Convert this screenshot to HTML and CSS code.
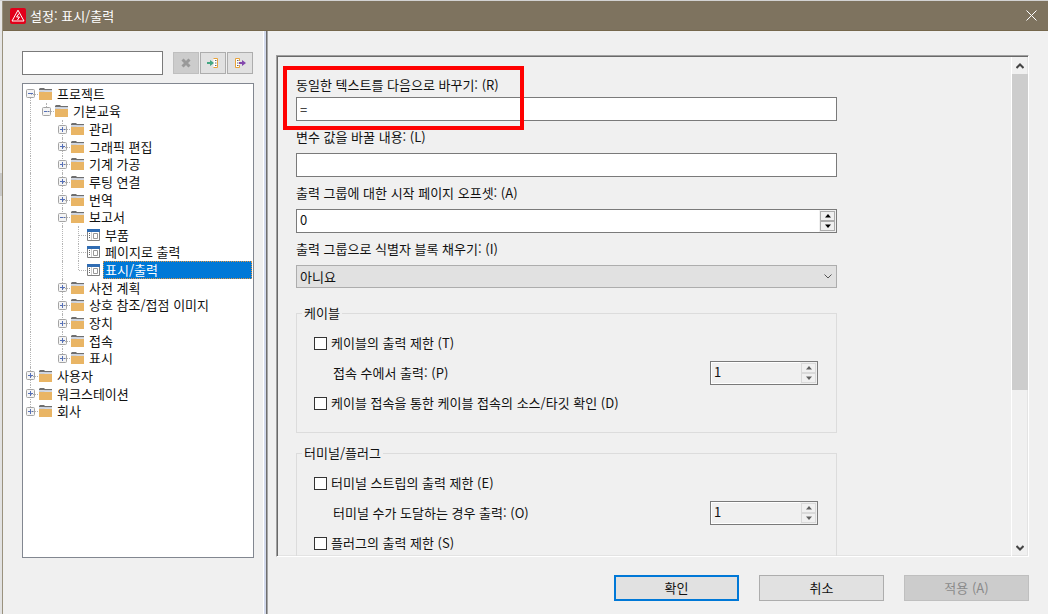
FILE: index.html
```html
<!DOCTYPE html>
<html lang="ko">
<head>
<meta charset="utf-8">
<title>설정: 표시/출력</title>
<link rel="stylesheet" href="styles.css">
</head>
<body>
<svg class="symbols" aria-hidden="true">
  <symbol id="folder" viewBox="0 0 13 12"><path d="M5 1h8v3H0V2h5z" fill="#d5dae3"/><path d="M1 0h4l1 1h7v1H0V1z" fill="#6f6f6f"/><path d="M0 3h5l1-1h7v1H6L5 4H0z" fill="#c9ced8"/><path d="M0 4h13v8H0z" fill="#e9b565"/></symbol>
  <symbol id="page" viewBox="0 0 13 12"><path d="M.5 1.500h12v10H.5z" fill="#fff" stroke="#808080"/><path d="M0 0h13v3H0z" fill="#2f6cb3"/><path d="M2 4h1v1H2zM2 6h1v1H2zM2 8h1v1H2z" fill="#666"/><path d="M4.500 3v8" stroke="#ccc"/><path d="M6.500 4.500h4v5h-4z" fill="#fff" stroke="#999"/></symbol>
  <symbol id="plus" viewBox="0 0 9 9"><rect x=".5" y=".5" width="8" height="8" rx="1" fill="#f4f4f4" stroke="#a4a4a4"/><path d="M2 4.500h5M4.500 2v5" stroke="#5570b8"/></symbol>
  <symbol id="minus" viewBox="0 0 9 9"><rect x=".5" y=".5" width="8" height="8" rx="1" fill="#f4f4f4" stroke="#a4a4a4"/><path d="M2 4.500h5" stroke="#5570b8"/></symbol>
  <symbol id="up" viewBox="0 0 6 4"><path d="M3 0l3 3.500H0z"/></symbol>
  <symbol id="down" viewBox="0 0 6 4"><path d="M3 4L0 .5h6z"/></symbol>
</svg>
<div class="desktop">
<main class="dialog">
  <header class="titlebar">
    <svg class="logo" viewBox="0 0 16 16" aria-hidden="true"><rect width="16" height="16" rx="2" fill="#e2001a"/><path d="M8 2.200L14 13H2z" fill="none" stroke="#fff"/><path d="M9 5.500L6.500 9h3L7.500 12" fill="none" stroke="#fff"/></svg>
    <h1>설정: 표시/출력</h1>
    <button class="close" aria-label="닫기"><svg width="11" height="11" viewBox="0 0 11 11"><path d="M.5.5l10 10M10.500.5l-10 10" stroke="#fff" fill="none"/></svg></button>
  </header>
  <div class="body">
    <aside class="nav">
      <div class="toolbar">
        <input class="search" type="text" aria-label="검색">
        <button class="tool off" disabled aria-label="지우기"><svg width="10" height="10" viewBox="0 0 10 10"><path d="M1.500 1.500l7 7M8.500 1.500l-7 7" stroke="#999" stroke-width="3"/></svg></button>
        <button class="tool" aria-label="가져오기"><svg width="12" height="10" viewBox="0 0 12 10"><path d="M6.500.5h4v9h-4" fill="#fff" stroke="#e8a33a"/><path d="M8 2.500h1.500M8 5h1.500M8 7.500h1.500" stroke="#666"/><path d="M0 4h3V2l4 3-4 3V6H0z" fill="#43a783"/></svg></button>
        <button class="tool" aria-label="내보내기"><svg width="12" height="10" viewBox="0 0 12 10"><path d="M5.500 3V.5h-4v9h4V7" fill="#fff" stroke="#e8a33a"/><path d="M3 2.500h1.500M3 5h1.500M3 7.500h1.500" stroke="#666"/><path d="M5 4h3V2l4 3-4 3V6H5z" fill="#8247ad"/></svg></button>
      </div>
      <div class="tree-box">
      <ul class="tree" role="tree">
        <li role="treeitem"><i class="first"><svg><use href="#minus"/></svg></i><svg class="ico"><use href="#folder"/></svg><span>프로젝트</span></li>
        <li role="treeitem"><i class="line"></i><i class="end"><svg><use href="#minus"/></svg></i><svg class="ico"><use href="#folder"/></svg><span>기본교육</span></li>
        <li role="treeitem"><i class="line"></i><i></i><i class="tee"><svg><use href="#plus"/></svg></i><svg class="ico"><use href="#folder"/></svg><span>관리</span></li>
        <li role="treeitem"><i class="line"></i><i></i><i class="tee"><svg><use href="#plus"/></svg></i><svg class="ico"><use href="#folder"/></svg><span>그래픽 편집</span></li>
        <li role="treeitem"><i class="line"></i><i></i><i class="tee"><svg><use href="#plus"/></svg></i><svg class="ico"><use href="#folder"/></svg><span>기계 가공</span></li>
        <li role="treeitem"><i class="line"></i><i></i><i class="tee"><svg><use href="#plus"/></svg></i><svg class="ico"><use href="#folder"/></svg><span>루팅 연결</span></li>
        <li role="treeitem"><i class="line"></i><i></i><i class="tee"><svg><use href="#plus"/></svg></i><svg class="ico"><use href="#folder"/></svg><span>번역</span></li>
        <li role="treeitem"><i class="line"></i><i></i><i class="tee"><svg><use href="#minus"/></svg></i><svg class="ico"><use href="#folder"/></svg><span>보고서</span></li>
        <li role="treeitem"><i class="line"></i><i></i><i class="line"></i><i class="tee"></i><svg class="ico"><use href="#page"/></svg><span>부품</span></li>
        <li role="treeitem"><i class="line"></i><i></i><i class="line"></i><i class="tee"></i><svg class="ico"><use href="#page"/></svg><span>페이지로 출력</span></li>
        <li role="treeitem" aria-selected="true"><i class="line"></i><i></i><i class="line"></i><i class="end"></i><svg class="ico"><use href="#page"/></svg><span class="selected">표시/출력</span></li>
        <li role="treeitem"><i class="line"></i><i></i><i class="tee"><svg><use href="#plus"/></svg></i><svg class="ico"><use href="#folder"/></svg><span>사전 계획</span></li>
        <li role="treeitem"><i class="line"></i><i></i><i class="tee"><svg><use href="#plus"/></svg></i><svg class="ico"><use href="#folder"/></svg><span>상호 참조/접점 이미지</span></li>
        <li role="treeitem"><i class="line"></i><i></i><i class="tee"><svg><use href="#plus"/></svg></i><svg class="ico"><use href="#folder"/></svg><span>장치</span></li>
        <li role="treeitem"><i class="line"></i><i></i><i class="tee"><svg><use href="#plus"/></svg></i><svg class="ico"><use href="#folder"/></svg><span>접속</span></li>
        <li role="treeitem"><i class="line"></i><i></i><i class="end"><svg><use href="#plus"/></svg></i><svg class="ico"><use href="#folder"/></svg><span>표시</span></li>
        <li role="treeitem"><i class="tee"><svg><use href="#plus"/></svg></i><svg class="ico"><use href="#folder"/></svg><span>사용자</span></li>
        <li role="treeitem"><i class="tee"><svg><use href="#plus"/></svg></i><svg class="ico"><use href="#folder"/></svg><span>워크스테이션</span></li>
        <li role="treeitem"><i class="end"><svg><use href="#plus"/></svg></i><svg class="ico"><use href="#folder"/></svg><span>회사</span></li>
      </ul>
      </div>
    </aside>
    <div class="splitter"></div>
    <section class="content">
      <div class="viewport">
        <form class="form" id="settings">
          <div class="field tight"><label for="same">동일한 텍스트를 다음으로 바꾸기: (R)</label><input id="same" type="text" value="="></div>
          <div class="field"><label for="vars">변수 값을 바꿀 내용: (L)</label><input id="vars" type="text"></div>
          <div class="field"><label for="offset">출력 그룹에 대한 시작 페이지 오프셋: (A)</label>
            <div class="spin"><input id="offset" type="number" value="0"><div class="steps"><button type="button" aria-label="증가"><svg><use href="#up"/></svg></button><button type="button" aria-label="감소"><svg><use href="#down"/></svg></button></div></div>
          </div>
          <div class="field"><label for="fill">출력 그룹으로 식별자 블록 채우기: (I)</label>
            <div class="combo"><select id="fill"><option>아니요</option></select><svg class="chevron" viewBox="0 0 8 5"><path d="M.5.5L4 4 7.500.5" fill="none" stroke="#555"/></svg></div>
          </div>
          <fieldset>
            <legend>케이블</legend>
            <div class="row"><input type="checkbox" id="c1"><label for="c1">케이블의 출력 제한 (T)</label></div>
            <div class="row sub"><label for="n1">접속 수에서 출력: (P)</label>
              <div class="spin small"><input id="n1" type="number" value="1" disabled><div class="steps"><button type="button" disabled aria-label="증가"><svg><use href="#up"/></svg></button><button type="button" disabled aria-label="감소"><svg><use href="#down"/></svg></button></div></div></div>
            <div class="row"><input type="checkbox" id="c2"><label for="c2">케이블 접속을 통한 케이블 접속의 소스/타깃 확인 (D)</label></div>
          </fieldset>
          <fieldset>
            <legend>터미널/플러그</legend>
            <div class="row"><input type="checkbox" id="c3"><label for="c3">터미널 스트립의 출력 제한 (E)</label></div>
            <div class="row sub"><label for="n2">터미널 수가 도달하는 경우 출력: (O)</label>
              <div class="spin small"><input id="n2" type="number" value="1" disabled><div class="steps"><button type="button" disabled aria-label="증가"><svg><use href="#up"/></svg></button><button type="button" disabled aria-label="감소"><svg><use href="#down"/></svg></button></div></div></div>
            <div class="row"><input type="checkbox" id="c4"><label for="c4">플러그의 출력 제한 (S)</label></div>
          </fieldset>
          <div class="highlight"></div>
        </form>
        <div class="scrollbar">
          <button type="button" aria-label="위로"><svg viewBox="0 0 8 6"><path d="M.5 5L4 1.500 7.500 5" fill="none" stroke="#444" stroke-width="2"/></svg></button>
          <div class="track"><div class="thumb"></div></div>
          <button type="button" aria-label="아래로"><svg viewBox="0 0 8 6"><path d="M.5 1L4 4.500 7.500 1" fill="none" stroke="#444" stroke-width="2"/></svg></button>
        </div>
      </div>
      <footer class="actions">
        <button class="btn primary">확인</button>
        <button class="btn">취소</button>
        <button class="btn" disabled>적용 (A)</button>
      </footer>
    </section>
  </div>
</main>
</div>
</body>
</html>
```

FILE: styles.css
```css
* { box-sizing: border-box; }
body {
  margin: 0;
  font: 13px/16px "Noto Sans CJK KR", sans-serif;
  color: #111;
}
button, input, select { font: inherit; color: inherit; margin: 0; padding: 0; border-radius: 0; }
.symbols { position: absolute; width: 0; height: 0; }

.desktop {
  height: 100vh;
  padding: 1px 0 0 2px;
  background: linear-gradient(#d2d2d2 0 1px, #e6e6e6 1px 173px, #c8c8c8 173px 196px, #e2e2e2 196px);
}
.dialog {
  height: 100%;
  display: flex;
  flex-direction: column;
  background: #f0f0f0;
  border-left: 1px solid #9a927e;
  overflow: hidden;
}

.titlebar {
  flex: none;
  height: 30px;
  display: flex;
  align-items: center;
  gap: 4px;
  padding: 0 11px 0 7px;
  background: #7e735f;
  border-bottom: 1px solid #75674c;
}
.titlebar h1 { flex: 1; margin: 0; font-size: 13px; font-weight: 400; color: #fff; }
.logo { width: 16px; height: 16px; }
.close { display: flex; border: 0; background: none; }

.body { flex: 1; min-height: 0; display: flex; }

.nav {
  flex: none;
  width: 260px;
  padding: 20px 9px 56px 19px;
  display: flex;
  flex-direction: column;
  gap: 8px;
}
.toolbar { display: flex; align-items: center; gap: 1px; padding-right: 1px; }
.search {
  flex: 1;
  min-width: 0;
  height: 24px;
  margin-right: 9px;
  padding: 0 4px;
  background: #fff;
  border: 1px solid #7a7a7a;
}
.tool {
  width: 26px;
  height: 22px;
  display: flex;
  align-items: center;
  justify-content: center;
  background: #e1e1e1;
  border: 1px solid #adadad;
}
.tool.off { background: #ccc; border-color: #bfbfbf; }

.tree-box { flex: 1; min-height: 0; padding: 1px 1px 0 0; background: #fff; border: 1px solid #828790; overflow: hidden; }
.tree {
  height: 335px;
  margin: 0;
  padding: 0;
  list-style: none;
  display: grid;
  grid-template-rows: repeat(19, 1fr);
}
.tree li { display: flex; align-items: stretch; min-height: 0; white-space: nowrap; }
.tree i { flex: none; width: 16px; position: relative; display: flex; align-items: center; padding-left: 3px; }
.tree i svg { width: 9px; height: 9px; position: relative; }
.line::before, .tee::before, .end::before, .first::before {
  content: "";
  position: absolute;
  left: 7px;
  top: 0;
  bottom: 0;
  border-left: 1px dotted #b4b4b4;
}
.end::before { bottom: 50%; }
.first::before { top: 50%; }
.tee::after, .end::after, .first::after {
  content: "";
  position: absolute;
  left: 8px;
  right: 1px;
  top: 50%;
  border-top: 1px dotted #b4b4b4;
}
.ico { flex: none; width: 13px; height: 12px; align-self: center; margin-right: 3px; }
.tree span { padding-left: 2px; display: flex; align-items: center; }
.tree .selected { flex: 1; background: #0078d7; color: #fff; outline: 1px dotted #e39643; outline-offset: -1px; }

.splitter {
  flex: none;
  width: 5px;
  background: linear-gradient(90deg, #fff 1px, #d3daec 1px 3px, #6e6e6e 3px 4px, #a8a8a8 4px);
}

.content {
  flex: 1;
  min-width: 0;
  display: flex;
  flex-direction: column;
  padding: 24px 19px 13px 8px;
}
.viewport {
  flex: 1;
  min-height: 0;
  display: flex;
  justify-content: space-between;
  overflow: hidden;
  border: 1px solid;
  border-color: #a0a0a0 #fff #fff #a0a0a0;
  box-shadow: inset 1px 1px #696969, inset -1px -1px #e3e3e3;
  padding: 1px 0 0 2px;
}
.form { position: relative; flex: 0 1 558px; min-width: 0; padding: 20px 0 0 17px; }
.field { display: flex; flex-direction: column; gap: 8px; margin-bottom: 8px; }
.field.tight { gap: 4px; }
.field > input, .spin {
  height: 24px;
  background: #fff;
  border: 1px solid #7a7a7a;
}
.field > input { padding: 0 3px; }
.spin { display: flex; }
.spin input {
  flex: 1;
  min-width: 0;
  padding: 0 3px 2px;
  border: 0;
  background: none;
  appearance: textfield;
}
.spin input::-webkit-inner-spin-button { appearance: none; }
.steps { width: 17px; display: grid; grid-template-rows: 1fr 1fr; padding: 1px; background: #f0f0f0; }
.steps button {
  display: flex;
  align-items: center;
  justify-content: center;
  background: #f0f0f0;
  border: 1px solid #acacac;
}
.steps svg { width: 6px; height: 4px; fill: #000; }
.spin.small { width: 108px; background: #f0f0f0; box-shadow: inset 0 0 0 1px #fff; }
.small .steps button { border-color: #d9d9d9; }
.small .steps svg { fill: #606060; }

.combo { position: relative; display: flex; }
.combo select {
  flex: 1;
  height: 23px;
  padding: 0 3px;
  appearance: none;
  background: #e1e1e1;
  border: 1px solid #adadad;
}
.chevron { position: absolute; right: 5px; top: 9px; width: 8px; height: 5px; pointer-events: none; }

fieldset {
  min-width: 0;
  margin: 17px 0 0;
  padding: 7px 18px 14px 5px;
  border: 1px solid #dcdcdc;
}
fieldset + fieldset { margin-top: 12px; }
legend { padding: 0 2px; }
.row { height: 30px; display: flex; align-items: center; gap: 4px; padding-left: 12px; }
.row.sub { justify-content: space-between; padding-left: 31px; }
.row input[type="checkbox"] {
  appearance: none;
  width: 13px;
  height: 13px;
  background: #fff;
  border: 1px solid #333;
}

.highlight {
  position: absolute;
  left: 4px;
  top: 9px;
  width: 241px;
  height: 64px;
  border: 4px solid #f00;
  pointer-events: none;
}

.scrollbar {
  flex: none;
  width: 17px;
  display: flex;
  flex-direction: column;
  border-left: 1px solid #fff;
}
.scrollbar button { height: 17px; border: 0; background: none; display: flex; align-items: center; justify-content: center; }
.scrollbar svg { width: 8px; height: 6px; }
.track { flex: 1; }
.thumb { height: 68%; background: #cdcdcd; }

.actions { flex: none; display: flex; justify-content: flex-end; gap: 20px; padding-top: 18px; }
.btn {
  width: 125px;
  height: 26px;
  background: #e1e1e1;
  border: 1px solid #adadad;
}
.btn.primary { border: 2px solid #0078d7; }
.btn:disabled { background: #ccc; border-color: #bfbfbf; color: #8a8a8a; }
```
